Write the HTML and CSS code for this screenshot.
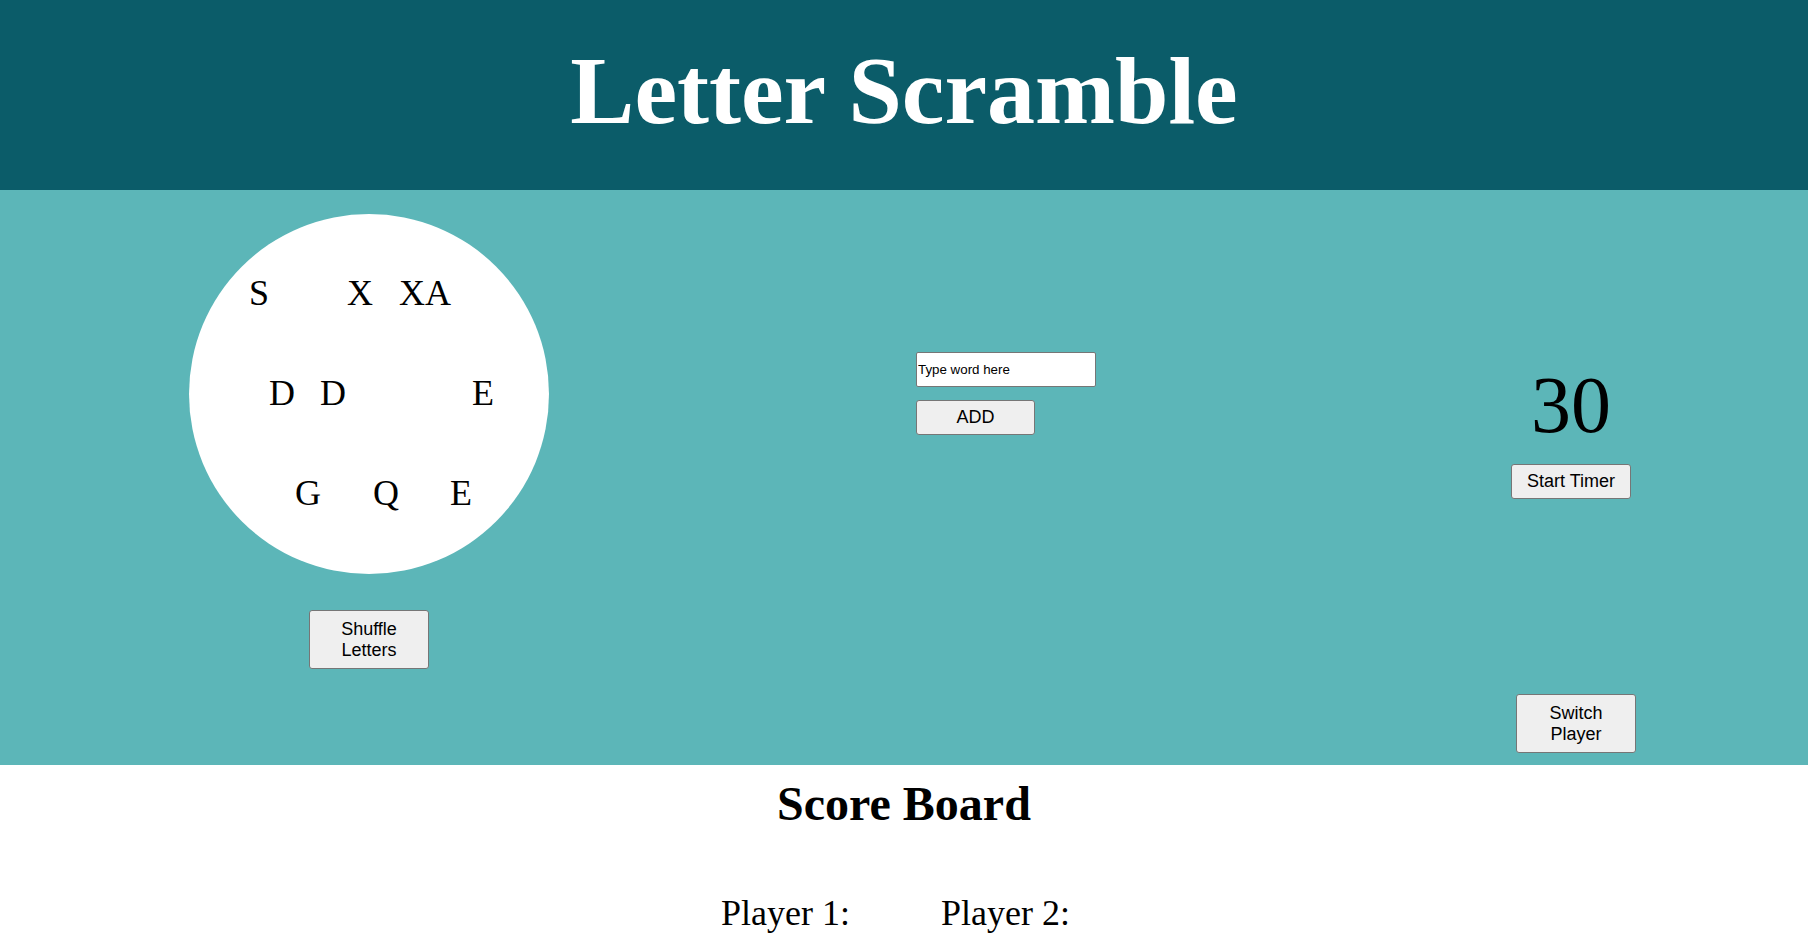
FILE: index.html
```html
<!DOCTYPE html>
<html lang="en">
<head>
<meta charset="utf-8">
<title>Letter Scramble</title>
<link rel="stylesheet" href="styles.css">
</head>
<body>
<header class="top">
  <h1 class="title">Letter Scramble</h1>
</header>
<main class="board">
  <section class="col-letters">
    <div class="circle">
      <div class="row row-1">
        <span class="ltr">S</span>
        <span class="ltr m78">X</span>
        <span class="ltr m26">X</span>
        <span class="ltr">A</span>
      </div>
      <div class="row row-2">
        <span class="ltr">D</span>
        <span class="ltr m25">D</span>
        <span class="ltr m126">E</span>
      </div>
      <div class="row row-3">
        <span class="ltr">G</span>
        <span class="ltr m52">Q</span>
        <span class="ltr m51">E</span>
      </div>
    </div>
    <button class="btn btn-tall">Shuffle Letters</button>
  </section>
  <section class="col-entry">
    <input class="word-input" type="text" placeholder="Type word here">
    <button class="btn btn-add">ADD</button>
  </section>
  <section class="col-timer">
    <div class="timer">30</div>
    <button class="btn">Start Timer</button>
    <button class="btn btn-tall btn-switch">Switch Player</button>
  </section>
</main>
<section class="scores">
  <h2 class="scores-title">Score Board</h2>
  <div class="players">
    <div class="player">Player 1:</div>
    <div class="player">Player 2:</div>
  </div>
</section>
</body>
</html>
```
FILE: styles.css
```css
html, body {
  margin: 0;
  padding: 0;
  background: #ffffff;
  font-family: "Liberation Serif", "Times New Roman", serif;
  color: #000;
}

.top {
  background: #0b5c69;
  height: 190px;
  box-sizing: border-box;
  padding-top: 36px;
}

.title {
  margin: 0;
  text-align: center;
  color: #ffffff;
  font-size: 96px;
  font-weight: bold;
  line-height: 110px;
}

.board {
  background: #5cb6b8;
  height: 575px;
  display: flex;
  padding-left: 189px;
}

.col-letters {
  width: 360px;
  padding-top: 24px;
  display: flex;
  flex-direction: column;
  align-items: center;
}

.circle {
  width: 360px;
  height: 360px;
  border-radius: 50%;
  background: #ffffff;
  box-sizing: border-box;
  padding-top: 59px;
  display: flex;
  flex-direction: column;
  gap: 59px;
}

.row {
  display: flex;
  height: 41px;
}

.row-1 { padding-left: 60px; }
.row-2 { padding-left: 80px; }
.row-3 { padding-left: 106px; }

.ltr {
  font-size: 36px;
  line-height: 41px;
}

.m25 { margin-left: 25px; }
.m26 { margin-left: 26px; }
.m51 { margin-left: 51px; }
.m52 { margin-left: 52px; }
.m78 { margin-left: 78px; }
.m126 { margin-left: 126px; }

.btn {
  width: 120px;
  height: 35px;
  padding: 0 6px;
  box-sizing: border-box;
  background: #efefef;
  border: 1px solid #767676;
  border-radius: 3px;
  font-family: "Liberation Sans", Arial, sans-serif;
  font-size: 18px;
  line-height: 20.7px;
  color: #000;
}

.btn-tall {
  height: 59px;
}

.col-letters .btn-tall {
  margin-top: 36px;
}

.col-entry {
  margin-left: 367px;
  width: 180px;
  padding-top: 162px;
  display: flex;
  flex-direction: column;
  align-items: flex-start;
  gap: 13px;
}

.word-input {
  width: 180px;
  height: 35px;
  box-sizing: border-box;
  margin: 0;
  padding: 1px 1px;
  border: 1px solid #767676;
  border-radius: 2px;
  background: #ffffff;
  font-family: "Liberation Sans", Arial, sans-serif;
  font-size: 13.33px;
  color: #000;
}

.word-input::placeholder {
  color: #000;
  opacity: 1;
}

.btn-add {
  width: 119px;
}

.col-timer {
  margin-left: 355px;
  width: 240px;
  box-sizing: border-box;
  padding-top: 169px;
  padding-bottom: 12px;
  display: flex;
  flex-direction: column;
  align-items: center;
}

.timer {
  font-size: 80px;
  line-height: 92px;
  margin-bottom: 13px;
}

.btn-switch {
  margin-top: auto;
  margin-left: 10px;
}

.scores {
  text-align: center;
  padding-top: 11px;
}

.scores-title {
  margin: 0;
  font-size: 48px;
  font-weight: bold;
  line-height: 55px;
}

.players {
  display: flex;
  justify-content: center;
  gap: 74px;
  margin-top: 62px;
}

.player {
  font-size: 36px;
  line-height: 41px;
  padding-right: 17px;
}
```
